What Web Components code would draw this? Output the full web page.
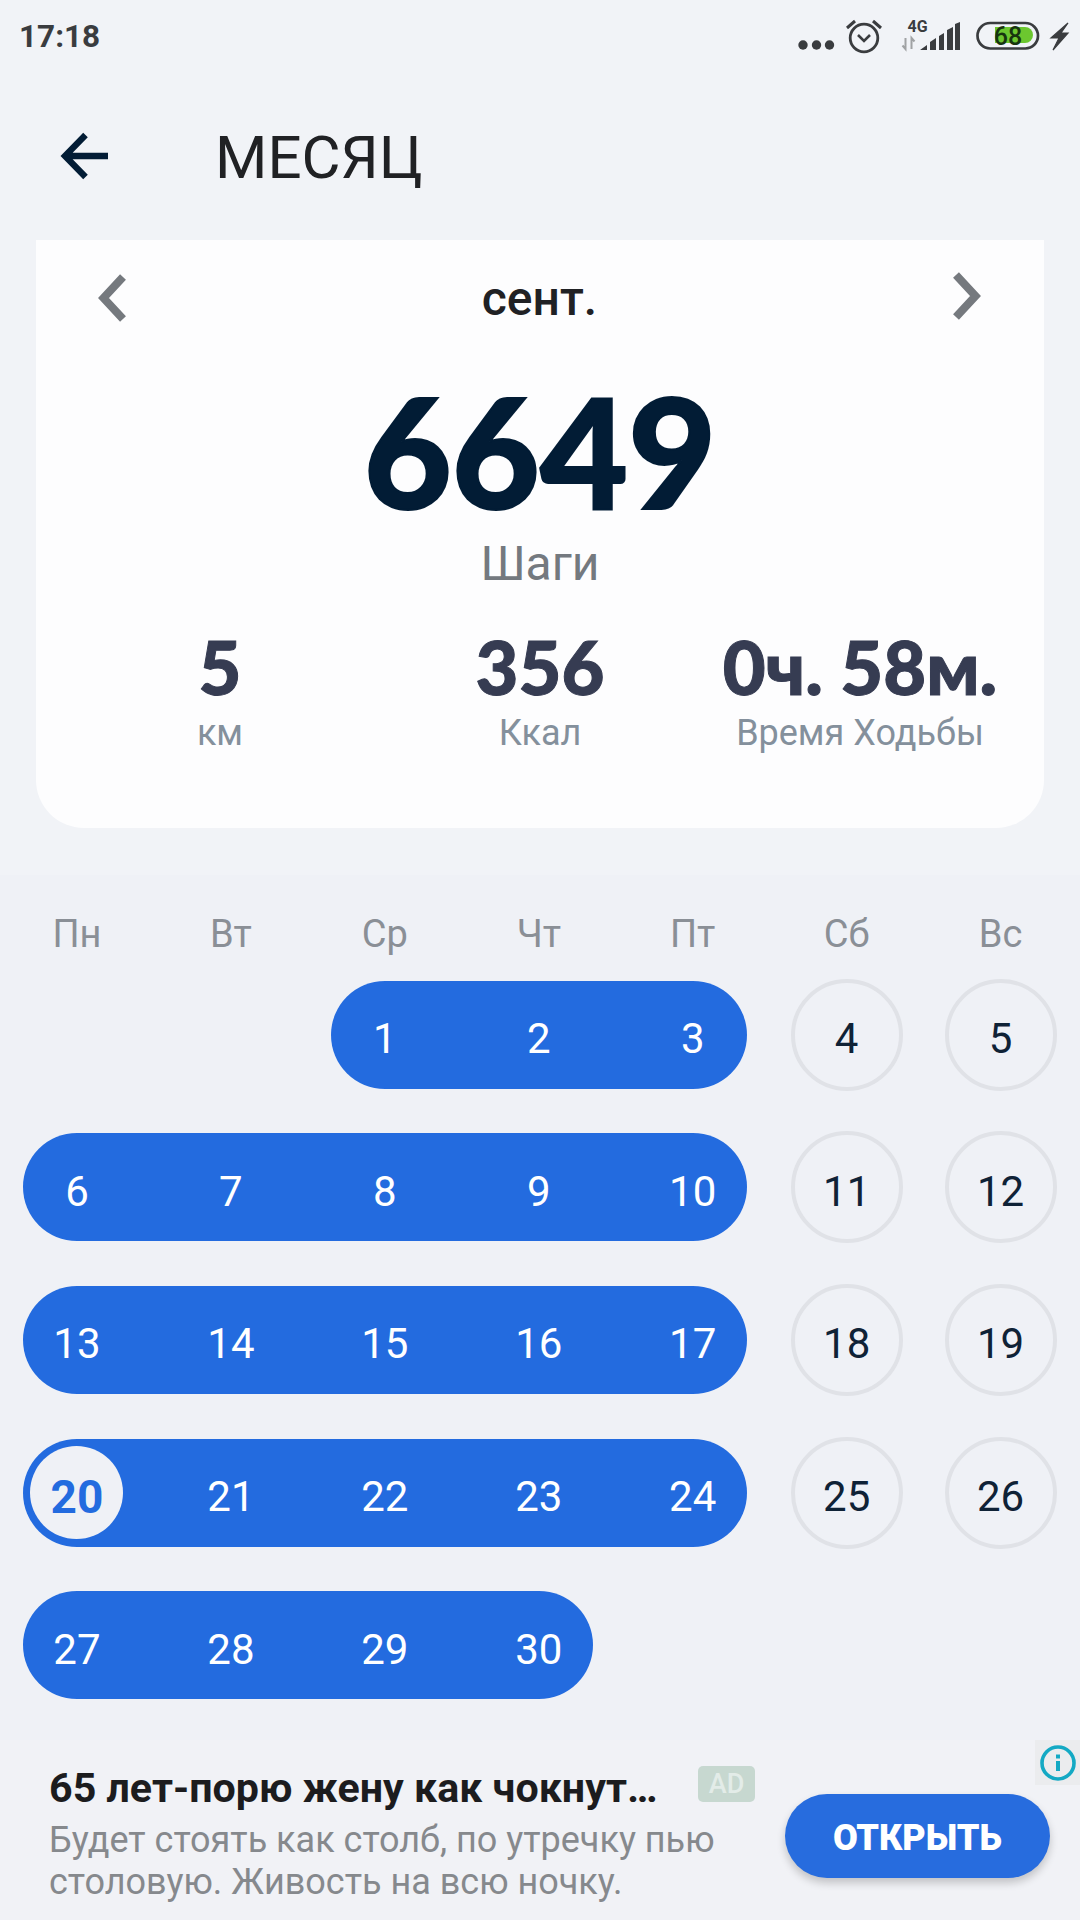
<!DOCTYPE html>
<html lang="ru">
<head>
<meta charset="UTF-8">
<title>Месяц</title>
<style>
  html, body { margin: 0; padding: 0; }
  body { width: 1080px; height: 1920px; overflow: hidden; background: #f1f3f7; font-family: Roboto, sans-serif; }
</style>
</head>
<body>
<step-page>
  <status-bar></status-bar>
  <top-bar>МЕСЯЦ</top-bar>
  <summary-card></summary-card>
  <month-calendar></month-calendar>
  <ad-banner></ad-banner>
</step-page>

<script>
  class StepPage extends HTMLElement {
    constructor() {
      super();
      this.attachShadow({ mode: 'open' });
      this.shadowRoot.innerHTML = `
        <style>
          :host { display: block; width: 1080px; height: 1920px; }
        </style>
        <slot></slot>`;
    }
  }

  class StatusBar extends HTMLElement {
    constructor() {
      super();
      this.attachShadow({ mode: 'open' });
      this.shadowRoot.innerHTML = `
        <style>
          :host { display: flex; align-items: center; height: 72px; padding-left: 19px; color: #3a3c3f; font: 700 31.500px Roboto, sans-serif; }
          .time { flex: 1; }
          svg { display: block; }
        </style>
        <span class="time">17:18</span>
        <svg width="290" height="72" viewBox="790 0 290 72">
          <g fill="#3a3c3f">
            <circle cx="803" cy="45" r="4.700"/><circle cx="816.500" cy="45" r="4.700"/><circle cx="829.500" cy="45" r="4.700"/>
          </g>
          <g fill="none" stroke="#3a3c3f">
            <circle cx="864" cy="38" r="13.800" stroke-width="2.800"/>
            <path d="M858 35l6 6 6-6" stroke-width="2.600"/>
            <path d="M847 28l8-7M873 21l8 7" stroke-width="3"/>
            <rect x="977.500" y="23" width="60.500" height="25.500" rx="12.700" stroke-width="2.700"/>
          </g>
          <path d="M995 27h30a8 8 0 0 1 0 16h-30z" fill="#6cc72f"/>
          <text x="1008" y="45" font-family="Roboto" font-weight="500" font-size="25" fill="#17340f" text-anchor="middle">68</text>
          <path d="M1068 23l-17 15h8l-6 12 15-17h-7z" fill="#3a3c3f" stroke="#3a3c3f" stroke-width="1.200"/>
          <text x="917.500" y="32" font-family="Roboto" font-weight="700" font-size="16" fill="#3a3c3f" text-anchor="middle">4G</text>
          <path d="M905.500 38v11l-3-3.500M911.500 49v-11l3 3.500" fill="none" stroke="#a0a2a4" stroke-width="2"/>
          <path d="M920 50l7-5v5zM930 50v-8l6-4v12zM939 50v-14l5-3v17zM947 50v-20l6-3v23zM955 50v-26l5-2v28z" fill="#3a3c3f"/>
        </svg>`;
    }
  }

  class TopBar extends HTMLElement {
    constructor() {
      super();
      this.attachShadow({ mode: 'open' });
      this.shadowRoot.innerHTML = `
        <style>
          :host { display: flex; align-items: center; height: 168px; padding-left: 58px; color: #202124; font: 400 60px Roboto, sans-serif; }
          svg { display: block; margin-right: 107px; }
          .title { margin-top: 3px; }
        </style>
        <svg width="50" height="50" viewBox="0 0 50 50">
          <path d="M27.500 4L7 25l20.500 21M7 25h43" fill="none" stroke="#021c35" stroke-width="6.400"/>
        </svg>
        <span class="title"><slot></slot></span>`;
    }
  }

  class StatItem extends HTMLElement {
    constructor() {
      super();
      this.attachShadow({ mode: 'open' });
      this.shadowRoot.innerHTML = `
        <style>
          :host { display: flex; flex-direction: column; align-items: center; width: 320px; white-space: nowrap; }
          .value { font: 900 74px/78px Lato, sans-serif; color: #363c52; -webkit-text-stroke: 1px #363c52; margin-top: 1px; }
          .label { font: 400 36px/40px Roboto, sans-serif; color: #84909c; margin-top: 7px; }
        </style>
        <span class="value"></span>
        <span class="label"></span>`;
    }
    connectedCallback() {
      this.shadowRoot.querySelector('.value').textContent = this.getAttribute('value');
      this.shadowRoot.querySelector('.label').textContent = this.getAttribute('label');
    }
  }

  class SummaryCard extends HTMLElement {
    constructor() {
      super();
      this.attachShadow({ mode: 'open' });
      this.shadowRoot.innerHTML = `
        <style>
          :host { display: block; box-sizing: border-box; height: 588px; margin: 0 36px; background: #fdfdfe; border-radius: 0 0 48px 48px; }
          .head { display: flex; align-items: center; justify-content: space-between; height: 116px; padding: 0 63px 0 62px; color: #202124; font: 500 48px Roboto, sans-serif; }
          .big { text-align: center; font: 900 152px/150px Lato, sans-serif; color: #021c35; -webkit-text-stroke: 2px #021c35; margin-top: 19px; }
          .caption { text-align: center; font: 400 48px/60px Roboto, sans-serif; color: #74797f; margin-top: 9px; }
          .stats { display: flex; justify-content: center; margin-top: 33px; }
          svg { display: block; }
          .next { margin-top: -4px; }
        </style>
        <div class="head">
          <svg width="30" height="48" viewBox="0 0 30 48"><path d="M25 3L5.500 24 25 45" fill="none" stroke="#75797e" stroke-width="8"/></svg>
          <span>сент.</span>
          <svg class="next" width="30" height="48" viewBox="0 0 30 48"><path d="M5 3l19.500 21L5 45" fill="none" stroke="#75797e" stroke-width="8"/></svg>
        </div>
        <div class="big">6649</div>
        <div class="caption">Шаги</div>
        <div class="stats">
          <stat-item value="5" label="км"></stat-item>
          <stat-item value="356" label="Ккал"></stat-item>
          <stat-item value="0ч. 58м." label="Время Ходьбы"></stat-item>
        </div>`;
    }
  }

  // one calendar cell: kind is start, mid, end, plain or today
  class DayCell extends HTMLElement {
    constructor() {
      super();
      this.attachShadow({ mode: 'open' });
      this.shadowRoot.innerHTML = `
        <style>
          :host { display: flex; align-items: center; justify-content: center; box-sizing: border-box; height: 108px; font: 400 42px Roboto, sans-serif; color: #fff; background: #236bdf; }
          :host([kind="start"]), :host([kind="today"]) { margin-left: 23px; padding-right: 23px; border-radius: 54px 0 0 54px; }
          :host([kind="end"]) { margin-right: 23px; padding-left: 23px; border-radius: 0 54px 54px 0; }
          :host([kind="plain"]) { background: none; color: #0f2236; }
          .n { display: flex; align-items: center; justify-content: center; flex: none; box-sizing: border-box; border-radius: 50%; padding-top: 8px; }
          :host([kind="plain"]) .n { width: 112px; height: 112px; border: 4px solid #e0e2e7; }
          :host([kind="today"]) .n { width: 93px; height: 93px; background: #eff1f6; color: #236bdf; font-weight: 700; font-size: 46px; }
        </style>
        <span class="n"><slot></slot></span>`;
    }
  }

  class MonthCalendar extends HTMLElement {
    constructor() {
      super();
      this.attachShadow({ mode: 'open' });
      const names = ['Пн', 'Вт', 'Ср', 'Чт', 'Пт', 'Сб', 'Вс'];
      const week = names.map(n => `<span class="wd">${n}</span>`).join('');
      let cells = '<span></span><span></span>';
      for (let d = 1; d <= 30; d++) {
        const col = (d + 1) % 7; // 0 is monday
        let kind = 'mid';
        if (col >= 5) kind = 'plain';
        else if (d === 20) kind = 'today';
        else if (col === 0 || d === 1) kind = 'start';
        else if (col === 4 || d === 30) kind = 'end';
        cells += `<day-cell kind="${kind}">${d}</day-cell>`;
      }
      this.shadowRoot.innerHTML = `
        <style>
          :host { display: block; box-sizing: border-box; height: 865px; margin-top: 47px; padding-top: 25px; background: #eff1f6; }
          .week, .days { display: grid; grid-template-columns: repeat(7, 153.950px); }
          .week { height: 68px; margin-bottom: 12.500px; }
          .days { grid-auto-rows: 108px; row-gap: 44.700px; }
          .wd { display: flex; align-items: center; justify-content: center; font: 400 38px Roboto, sans-serif; color: #8a8f96; }
        </style>
        <div class="week">${week}</div>
        <div class="days">${cells}</div>`;
    }
  }

  class AdBanner extends HTMLElement {
    constructor() {
      super();
      this.attachShadow({ mode: 'open' });
      this.shadowRoot.innerHTML = `
        <style>
          :host { display: flex; align-items: flex-start; box-sizing: border-box; height: 180px; background: #f1f2f6; position: relative; }
          .text { box-sizing: border-box; width: 785px; padding: 22px 0 0 49px; }
          .line { display: flex; align-items: center; }
          .title { font: 700 41.200px/52px Roboto, sans-serif; color: #1c1c1e; width: 649px; white-space: nowrap; }
          .tag { width: 57px; height: 36px; margin-bottom: 8px; background: #c7d8d0; border-radius: 5px; color: #e3ece8; font: 500 27px/36px Roboto, sans-serif; text-align: center; }
          .desc { font: 400 36px/42px Roboto, sans-serif; color: #86898d; margin-top: 5px; white-space: nowrap; }
          .btn { margin-top: 54px; width: 265px; height: 84px; border-radius: 42px; background: #276cde; color: #fff; font: 900 36px/88px Roboto, sans-serif; text-align: center; box-shadow: 0 5px 8px rgba(0,0,0,.2); }
          .info { position: absolute; right: 0; top: 0; width: 45px; height: 45px; background: #ebecee; display: flex; align-items: center; justify-content: center; }
          .info svg { display: block; }
        </style>
        <div class="text">
          <div class="line"><span class="title">65 лет-порю жену как чокнут…</span><span class="tag">AD</span></div>
          <div class="desc">Будет стоять как столб, по утречку пью<br>столовую. Живость на всю ночку.</div>
        </div>
        <div class="btn">ОТКРЫТЬ</div>
        <div class="info">
          <svg width="36" height="36" viewBox="0 0 36 36"><circle cx="18" cy="18" r="16" fill="none" stroke="#14a9c4" stroke-width="3.600"/><path d="M18 16v10M18 9.500v4" stroke="#14a9c4" stroke-width="4"/></svg>
        </div>`;
    }
  }

  customElements.define('step-page', StepPage);
  customElements.define('status-bar', StatusBar);
  customElements.define('top-bar', TopBar);
  customElements.define('stat-item', StatItem);
  customElements.define('summary-card', SummaryCard);
  customElements.define('day-cell', DayCell);
  customElements.define('month-calendar', MonthCalendar);
  customElements.define('ad-banner', AdBanner);
</script>
</body>
</html>
